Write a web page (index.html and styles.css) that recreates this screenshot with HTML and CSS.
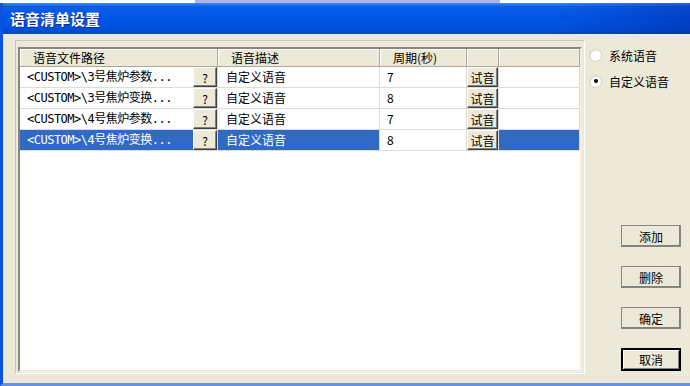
FILE: index.html
```html
<!DOCTYPE html>
<html lang="zh-CN">
<head>
    <meta charset="UTF-8">
    <title>语音清单设置</title>
    <link rel="stylesheet" href="styles.css">
</head>
<body>
    <div class="strip"></div>
    <div class="window">
        <div class="titlebar">语音清单设置</div>

        <div class="content">
            <div class="panel">
                <div class="list">
                    <div class="row head">
                        <div class="hc">语音文件路径</div>
                        <div class="hc">语音描述</div>
                        <div class="hc">周期(秒)</div>
                        <div class="hc"></div>
                        <div class="hc"></div>
                    </div>

                    <div class="row">
                        <div class="cell path"><span class="file">&lt;CUSTOM&gt;\3号焦炉参数...</span><button class="cbtn q">?</button></div>
                        <div class="cell desc">自定义语音</div>
                        <div class="cell edit">7</div>
                        <div class="cell play"><button class="cbtn">试音</button></div>
                        <div class="cell"></div>
                    </div>
                    <div class="row">
                        <div class="cell path"><span class="file">&lt;CUSTOM&gt;\3号焦炉变换...</span><button class="cbtn q">?</button></div>
                        <div class="cell desc">自定义语音</div>
                        <div class="cell edit">8</div>
                        <div class="cell play"><button class="cbtn">试音</button></div>
                        <div class="cell"></div>
                    </div>
                    <div class="row">
                        <div class="cell path"><span class="file">&lt;CUSTOM&gt;\4号焦炉参数...</span><button class="cbtn q">?</button></div>
                        <div class="cell desc">自定义语音</div>
                        <div class="cell edit">7</div>
                        <div class="cell play"><button class="cbtn">试音</button></div>
                        <div class="cell"></div>
                    </div>
                    <div class="row sel">
                        <div class="cell path"><span class="file">&lt;CUSTOM&gt;\4号焦炉变换...</span><button class="cbtn q">?</button></div>
                        <div class="cell desc">自定义语音</div>
                        <div class="cell edit">8</div>
                        <div class="cell play"><button class="cbtn">试音</button></div>
                        <div class="cell"></div>
                    </div>
                </div>
            </div>

            <div class="side">
                <div class="radios">
                    <label class="radio"><span class="dot"></span>系统语音</label>
                    <label class="radio"><span class="dot on"></span>自定义语音</label>
                </div>

                <div class="actions">
                    <button class="btn">添加</button>
                    <button class="btn">删除</button>
                    <button class="btn">确定</button>
                    <button class="btn default">取消</button>
                </div>
            </div>
        </div>
    </div>
</body>
</html>
```

FILE: styles.css
```css
* {
    margin: 0;
    padding: 0;
    box-sizing: border-box;
}

body {
    width: 690px;
    height: 386px;
    overflow: hidden;
    background: #fff;
    font-family: "Noto Sans CJK SC", sans-serif;
    font-size: 12px;
    color: #000;
}

.strip {
    height: 3px;
    background: linear-gradient(to right, #fff 0, #fff 195px, #aab4dc 195px, #aab4dc 500px, #fff 500px);
}

.window {
    height: 383px;
    display: flex;
    flex-direction: column;
    background: #ece9d8;
    border-left: 3px solid #0a52e3;
    border-bottom: 3px solid #6690e0;
}

/* Title bar */
.titlebar {
    flex: none;
    height: 31px;
    padding-left: 7px;
    line-height: 31px;
    color: #fff;
    font-size: 15px;
    font-weight: bold;
    text-shadow: 1px 1px 0 #0b2d8c;
    background:
        linear-gradient(to right, transparent 80%, rgba(0, 25, 140, 0.35) 100%),
        linear-gradient(#3b8cf7 0, #0c5eeb 12%, #0056e6 45%, #0052df 80%, #0a45c6 100%);
}

.content {
    flex: 1;
    display: flex;
    padding: 6px 0 0 12px;
}

/* List view */
.panel {
    width: 570px;
    height: 334px;
    display: flex;
    padding: 6px 2px 1px 2px;
    border: 1px solid;
    border-color: #c9c5b4 #fff #fff #c9c5b4;
}

.list {
    flex: 1;
    background: #fff;
    border: 2px solid;
    border-color: #8a877a #f1efe2 #f1efe2 #8a877a;
}

.row {
    display: grid;
    grid-template-columns: 198px 162px 87px 32px 1fr;
    height: 21px;
}

.row.head {
    height: 18px;
}

.hc {
    background: #ece9d8;
    border-right: 1px solid #aca899;
    border-bottom: 1px solid #aca899;
    box-shadow: inset 1px 1px 0 #fff;
    line-height: 17px;
    padding-left: 13px;
    white-space: nowrap;
}

.cell {
    border-right: 1px solid #dedcd4;
    border-bottom: 1px solid #dedcd4;
    line-height: 20px;
    padding-left: 7px;
    white-space: nowrap;
    overflow: hidden;
}

.cell.desc {
    padding-left: 8px;
}

.cell.path {
    display: flex;
    justify-content: space-between;
}

.file {
    font-family: "DejaVu Sans Mono", "Noto Sans CJK SC", monospace;
    letter-spacing: -0.5px;
}

.cell.play {
    padding-left: 0;
    display: flex;
}

.row.sel .cell {
    background: #316ac5;
    color: #fff;
}

.row.sel .cell.edit {
    background: #fff;
    color: #000;
}

/* Small cell buttons */
.cbtn {
    height: 20px;
    width: 31px;
    font-family: inherit;
    font-size: 12px;
    line-height: 17px;
    color: #000;
    background: #ece9d8;
    border: 1px solid;
    border-color: #fff #404040 #404040 #fff;
    box-shadow: inset -1px -1px 0 #808080;
}

.cbtn.q {
    width: 24px;
}

/* Right side */
.side {
    flex: 1;
    display: flex;
    flex-direction: column;
    padding: 8px 0 12px 4px;
}

.radios {
    display: flex;
    flex-direction: column;
    gap: 12px;
}

.radio {
    display: flex;
    align-items: center;
    gap: 7px;
    height: 14px;
}

.dot {
    width: 13px;
    height: 13px;
    border-radius: 50%;
    border: 1px solid #d4d1c4;
    background: radial-gradient(circle at 65% 65%, #fff 45%, #dedbcf 100%);
    display: flex;
    align-items: center;
    justify-content: center;
}

.dot.on::after {
    content: "";
    width: 4px;
    height: 4px;
    border-radius: 50%;
    background: #000;
}

.actions {
    margin-top: auto;
    margin-left: 32px;
    display: flex;
    flex-direction: column;
    gap: 19px;
}

.btn {
    width: 60px;
    height: 22px;
    font-family: inherit;
    font-size: 12px;
    color: #000;
    background: #ece9d8;
    border: 1px solid;
    border-color: #fff #404040 #404040 #fff;
    box-shadow: inset -1px -1px 0 #808080;
    outline: 1px solid #8a877a;
    outline-offset: -1px;
}

.btn.default {
    height: 23px;
    border: 2px solid #000;
    outline: none;
    box-shadow: inset 1px 1px 0 #fff, inset -1px -1px 0 #808080;
}
```
